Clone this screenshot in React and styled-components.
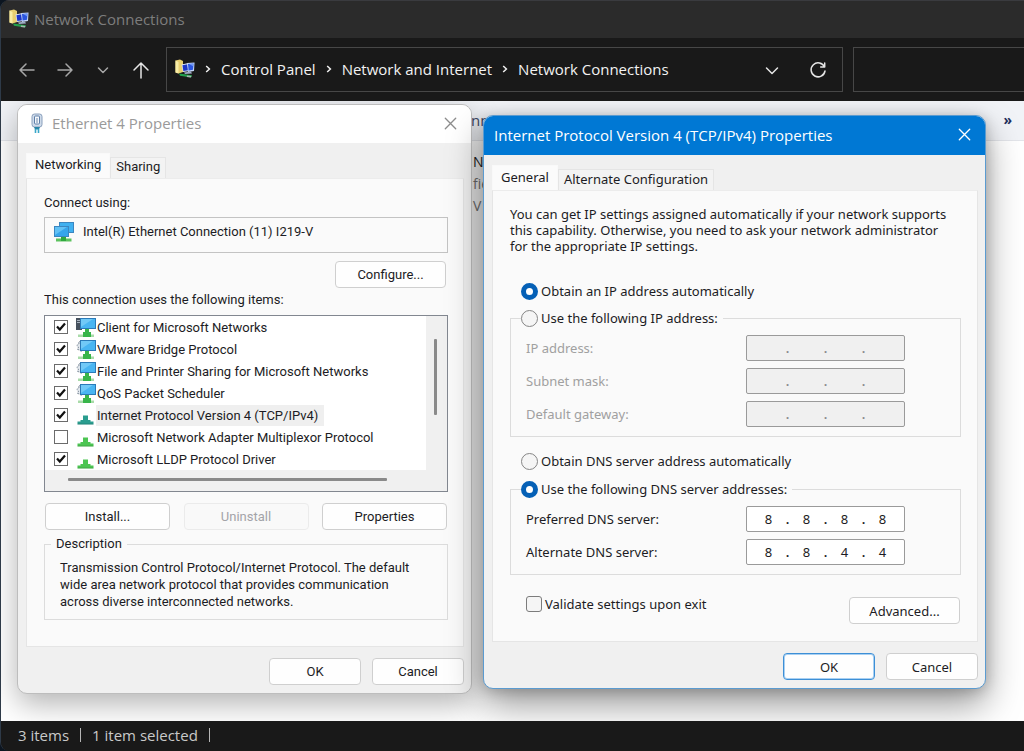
import React from "react";
import styled, { createGlobalStyle, css } from "styled-components";

const GlobalStyle = createGlobalStyle`
  * {
    box-sizing: border-box;
  }
  body {
    margin: 0;
    background: #0c1520;
    font-family: "Open Sans", "Noto Sans", sans-serif;
  }
  button,
  input {
    font: inherit;
    color: inherit;
    margin: 0;
  }
`;

/* ---------- explorer window ---------- */

const Explorer = styled.div`
  min-height: 100vh;
  display: flex;
  flex-direction: column;
  overflow: hidden;
  border-left: 1px solid #2e3a48;
  border-radius: 9px 0 0 9px;
  background: #191919;
`;

const TitleBar = styled.header`
  height: 38px;
  display: flex;
  align-items: center;
  gap: 5px;
  padding: 0 8px 2px;
  background: #2b2b2b;
  border-top: 1px solid #3a3b3f;
  color: #7d7d7d;
  font-size: 15px;
`;

const NavBar = styled.nav`
  height: 63px;
  display: flex;
  align-items: center;
  padding: 8px 0 8px 16px;
  background: #191919;
`;

const NavButtons = styled.div`
  display: flex;
  align-items: center;
  gap: 18px;
  margin-right: 15px;
`;

const IconButton = styled.button`
  display: grid;
  place-items: center;
  width: 20px;
  height: 20px;
  padding: 0;
  border: 0;
  background: none;
  color: ${({ $color }) => $color || "#e6e6e6"};
`;

const AddressBar = styled.div`
  flex: 1;
  height: 45px;
  display: flex;
  align-items: center;
  padding: 0 14px 0 8px;
  border: 1px solid #474747;
  color: #f2f2f2;
  font-size: 15px;
`;

const Crumb = styled.a`
  color: inherit;
  text-decoration: none;
  white-space: nowrap;
`;

const Crumbs = styled.div`
  flex: 1;
  display: flex;
  align-items: center;
  gap: 10px;
  padding-bottom: 2px;

  svg {
    flex: none;
  }
`;

const AddressTools = styled.div`
  display: flex;
  gap: 26px;
`;

const SearchBox = styled.input`
  width: 171px;
  height: 45px;
  margin-left: 10px;
  border: 1px solid #474747;
  border-right: 0;
  border-radius: 0;
  background: transparent;
  outline: 0;
`;

const Desktop = styled.main`
  flex: 1 0 620px;
  position: relative;
  overflow: hidden;
  background: #fff;
`;

const CommandBar = styled.div`
  height: 40px;
  display: flex;
  align-items: center;
  justify-content: space-between;
  padding: 0 12px 2px 470px;
  background: #f1f3f7;
  border-bottom: 1px solid #e3e5ea;
  color: #3d4a66;
  font-size: 15px;

  b {
    color: #1f2f5c;
    font-size: 14px;
  }
`;

const FileTile = styled.div`
  padding: 10px 0 0 472px;
  color: #777;
  font-size: 14px;
  line-height: 22px;

  strong {
    display: block;
    color: #222;
    font-weight: 400;
  }
  span {
    display: block;
  }
`;

const StatusBar = styled.footer`
  height: 30px;
  display: flex;
  align-items: center;
  gap: 11px;
  padding: 0 17px 2px;
  background: #191919;
  color: #c9c9c9;
  font-size: 15px;
`;

const Divider = styled.span`
  width: 1px;
  height: 14px;
  background: #b5b5b5;
`;

/* ---------- dialogs ---------- */

const Dialog = styled.section`
  position: absolute;
  left: ${({ $x }) => $x}px;
  top: ${({ $y }) => $y}px;
  width: ${({ $width }) => $width}px;
  overflow: hidden;
  border: 1px solid ${({ $active }) => ($active ? "#5b9bd0" : "#bdbdbd")};
  border-radius: 10px;
  background: #f0f0f0;
  color: #1c1c24;
  font-family: ${({ $font }) => $font};
  font-size: 13px;
  line-height: 16px;
  box-shadow: ${({ $active }) =>
    $active
      ? "0 16px 36px rgba(0, 0, 0, 0.4), 0 2px 14px rgba(0, 0, 0, 0.2)"
      : "0 10px 30px rgba(0, 0, 0, 0.3)"};
`;

const DialogTitle = styled.div`
  height: ${({ $active }) => ($active ? 39 : 38)}px;
  display: flex;
  align-items: center;
  gap: 6px;
  padding: 0 11px 2px 10px;
  background: ${({ $active }) => ($active ? "#0078d4" : "#fff")};
  color: ${({ $active }) => ($active ? "#fff" : "#9a9a9a")};
  font-family: "Open Sans", "Noto Sans", sans-serif;
  font-size: 15px;

  h2 {
    flex: 1;
    margin: 0;
    font-size: inherit;
    font-weight: 400;
  }
`;

const DialogBody = styled.div`
  padding: 10px 7px 8px 8px;
`;

const TabList = styled.div`
  display: flex;
  align-items: flex-end;
`;

const Tab = styled.button`
  height: 21px;
  padding: 0 5px 2px;
  border: 1px solid #e5e5e5;
  border-bottom: 0;
  background: #f3f3f3;
  white-space: nowrap;

  ${({ $selected }) =>
    $selected &&
    css`
      height: 25px;
      padding: 0 8px 2px;
      border-color: #f9f9f9;
      background: #fbfbfb;
    `}
`;

const TabPanel = styled.div`
  padding: ${({ $padding }) => $padding};
  border: 1px solid #e5e5e5;
  border-top-color: #ececec;
  background: #fafafa;
`;

const Footer = styled.div`
  display: flex;
  justify-content: flex-end;
  gap: 11px;
  padding-top: 11px;
`;

const PushButton = styled.button`
  width: ${({ $width }) => $width || 92}px;
  height: 27px;
  padding: 0;
  border: 1px solid ${({ $primary }) => ($primary ? "#3d8fd6" : "#cfcfcf")};
  border-radius: 4px;
  background: #fefefe;
  box-shadow: ${({ $primary }) => ($primary ? "inset 0 0 0 1px #a9d0f2" : "none")};

  &:disabled {
    border-color: #ebebeb;
    background: #f9f9f9;
    color: #a3a3a8;
  }
`;

const Line = styled.p`
  margin: 0;
`;

const AdapterBox = styled.div`
  height: 36px;
  display: flex;
  align-items: center;
  gap: 9px;
  margin: 6px 0 8px;
  padding: 0 9px 6px;
  border: 1px solid #c3c3c3;
`;

const RightRow = styled.div`
  display: flex;
  justify-content: flex-end;
  margin-bottom: 4px;
  padding-right: 2px;
`;

const ListBox = styled.div`
  display: grid;
  grid-template: auto 21px / 1fr 21px;
  margin: 7px 0 11px;
  border: 1px solid #828790;
  background: #f0f0f0;
`;

const ItemList = styled.ul`
  margin: 0;
  padding: 0;
  list-style: none;
  background: #fff;
`;

const Item = styled.li`
  height: 22px;
  display: flex;
  align-items: center;
  padding-left: 9px;

  label {
    display: flex;
    align-items: center;
    height: 21px;
    padding: 2px 6px 0 1px;
    background: ${({ $selected }) => ($selected ? "#efefef" : "none")};
    white-space: nowrap;
  }
`;

const Tick = styled.span`
  display: grid;
  margin-right: 8px;

  input,
  svg {
    grid-area: 1 / 1;
    width: 14px;
    height: 14px;
  }
  input {
    appearance: none;
    border: 1px solid #6b6b6b;
    background: #fff;
  }
  svg {
    display: none;
    pointer-events: none;
  }
  input:checked + svg {
    display: block;
  }
`;

const ScrollTrack = styled.div`
  display: flex;
  padding: ${({ $vertical }) => ($vertical ? "23px 0 0 8px" : "8px 0 0 23px")};
`;

const ScrollThumb = styled.div`
  width: ${({ $vertical }) => ($vertical ? "3px" : "89%")};
  height: ${({ $vertical }) => ($vertical ? "76px" : "3px")};
  border-radius: 1px;
  background: #8a8a8a;
`;

const ButtonRow = styled.div`
  display: flex;
  justify-content: space-between;
  margin-bottom: 6px;
  padding: 0 1px;
`;

const Group = styled.fieldset`
  min-width: 0;
  margin: ${({ $margin }) => $margin || 0};
  padding: ${({ $padding }) => $padding};
  border: 1px solid #dcdcdc;

  legend {
    padding: 0 5px 0 ${({ $legendPad }) => $legendPad || 0}px;
  }
`;

const Description = styled.p`
  margin: 0;
  padding-left: 9px;
  line-height: 17px;
`;

const Intro = styled.p`
  max-width: 442px;
  margin: 0 0 27px;
`;

const Choice = styled.label`
  height: 20px;
  display: flex;
  align-items: center;
  gap: 3px;
  padding-left: ${({ $indent }) => $indent || 0}px;
  white-space: nowrap;
`;

const Radio = styled.input`
  appearance: none;
  flex: none;
  width: 17px;
  height: 17px;
  border: 1px solid #858585;
  border-radius: 50%;
  background: #f5f5f5;

  &:checked {
    border: 5px solid #0560b6;
    background: #fff;
  }
`;

const CheckBox = styled.input`
  appearance: none;
  flex: none;
  width: 16px;
  height: 16px;
  border: 1px solid #7c7c7c;
  border-radius: 3px;
  background: #f5f5f5;
`;

const Fields = styled.div`
  display: grid;
  gap: 7px;
  padding-left: 5px;
`;

const FieldRow = styled.div`
  height: 26px;
  display: flex;
  align-items: center;
  justify-content: space-between;
  color: ${({ $disabled }) => ($disabled ? "#a0a0a0" : "inherit")};
`;

const IpField = styled.div`
  width: 159px;
  height: 26px;
  display: flex;
  align-items: center;
  justify-content: center;
  border: 1px solid #9a9a9a;
  border-radius: 2px;
  background: ${({ $disabled }) => ($disabled ? "#f0f0f0" : "#fff")};
  color: ${({ $disabled }) => ($disabled ? "#8a8a8a" : "inherit")};

  input {
    width: 30px;
    height: 20px;
    padding: 0;
    border: 0;
    outline: 0;
    background: none;
    text-align: center;
  }
  span {
    width: 8px;
    font-weight: 600;
    text-align: center;
  }
`;

const OptionRow = styled.div`
  display: flex;
  align-items: flex-start;
  justify-content: space-between;
  padding: 19px 1px 0 16px;

  button {
    margin-top: 3px;
  }
`;

/* ---------- icons ---------- */

const Stroke = ({ d, size = 18, width = 1.5 }) => (
  <svg
    width={size}
    height={size}
    viewBox="0 0 18 18"
    fill="none"
    stroke="currentColor"
    strokeWidth={width}
    strokeLinecap="round"
    strokeLinejoin="round"
  >
    <path d={d} />
  </svg>
);

const Chevron = () => (
  <svg width="6" height="8" viewBox="0 0 6 8" fill="none" stroke="#f0f0f0" strokeWidth="1.5">
    <path d="M1.2 1 4.4 4 1.2 7" />
  </svg>
);

const ConnectionsIcon = () => (
  <svg width="20" height="20" viewBox="0 0 20 20">
    <path d="M0.5 1.5 5 0.5 8 2v11l-4.500 1.500-3-1z" fill="#e8cf70" />
    <path d="M0.500 1.500 3.500 3v11.500l-3-1z" fill="#f8eda6" />
    <path d="m6.500 5.500 7-1.500 1 8-6.500 1z" fill="#dbe4f5" />
    <path d="m7.500 6.300 5-1 .8 6-5 .8z" fill="#1c35c8" />
    <path d="m12 4 7.500-.5-.5 8.500-6 1z" fill="#c3d4f4" />
    <path d="m13 5 5.500-.4-.5 6.200-4.400.7z" fill="#2b55df" />
    <path d="m14 5 4.300-.3-.2 2.500z" fill="#6f97f5" />
    <path d="m9 13.500 7-1 1 2-7 .6z" fill="#9fabc4" />
    <path d="m4 14.500 13 1.700-1 2.300-11-1.700z" fill="#22a04c" />
    <path d="m12 16.500 4.500.6-.7 1.400-4-.6z" fill="#a8b5b0" />
  </svg>
);

const EthernetPlugIcon = () => (
  <svg width="18" height="20" viewBox="0 0 18 20">
    <rect x="4" y="1" width="10" height="13" rx="2.500" fill="#cfdbea" stroke="#8aa0bd" />
    <rect x="6.500" y="3" width="5" height="8" rx="1" fill="#f4f8fc" stroke="#5f7fa8" />
    <path d="M9 5v5" stroke="#6c86aa" />
    <path d="M6 14h6l-1 2.500H7z" fill="#2a86a8" />
    <path d="M7.500 16v4M10.500 16v4" stroke="#39a7c9" strokeWidth="1.600" />
  </svg>
);

const AdapterIcon = () => (
  <svg width="20" height="20" viewBox="0 0 20 20">
    <path d="M7 13h5v3.500h5.500V19.500H2v-3h5z" fill="#5cc25e" />
    <path d="M7 13h5v6H7z" fill="#2fa83f" />
    <rect x="5.500" y="0.500" width="14" height="10" fill="#3fb0f0" stroke="#3a86c0" />
    <rect x="0.500" y="4.500" width="14" height="10" fill="#35a5ec" stroke="#3a86c0" />
    <path d="M1 5h12L1 13z" fill="#7ed3fb" opacity="0.6" />
  </svg>
);

const ClientIcon = ({ dark }) => (
  <svg width="20" height="21" viewBox="0 0 20 21">
    {dark ? (
      <>
        <rect x="0" y="1" width="6" height="12" fill="#46515e" />
        <path d="M1 3.500h4M1 5.500h4" stroke="#a8b3bf" />
      </>
    ) : (
      <path
        d="M5 2.500 2.500 3 3 5 .8 6.500 2.500 8l-1 2.500L4 11l1.500 2"
        fill="#e3e9ef"
        stroke="#7f8c9a"
        strokeDasharray="2 1"
      />
    )}
    <rect x="4.500" y="1.500" width="15" height="10" fill="#49b5f2" stroke="#2b7ab8" />
    <path d="M5 2h12L5 10z" fill="#83d2fa" opacity="0.7" />
    <path d="M2 17.500h16v2.500H2z" fill="#a9dba9" />
    <path d="M9 12h4v3h2v5H7v-5h2z" fill="#38b54a" />
  </svg>
);

const ProtocolIcon = ({ color }) => (
  <svg width="20" height="21" viewBox="0 0 20 21">
    <path d="M7 10.500h5v4.500h2.500v1.500H17.500v3H1.500v-3H4.500V15H7z" fill={color} />
    <path d="M1.500 19h16" stroke="#000" strokeOpacity="0.15" />
  </svg>
);

const CloseIcon = () => (
  <Stroke d="M3.500 3.500 14.500 14.500M14.500 3.500 3.500 14.500" size={17} width={1.4} />
);

/* ---------- content ---------- */

const items = [
  { name: "Client for Microsoft Networks", checked: true, icon: <ClientIcon dark /> },
  { name: "VMware Bridge Protocol", checked: true, icon: <ClientIcon /> },
  { name: "File and Printer Sharing for Microsoft Networks", checked: true, icon: <ClientIcon /> },
  { name: "QoS Packet Scheduler", checked: true, icon: <ClientIcon /> },
  {
    name: "Internet Protocol Version 4 (TCP/IPv4)",
    checked: true,
    selected: true,
    icon: <ProtocolIcon color="#2a9d8f" />,
  },
  { name: "Microsoft Network Adapter Multiplexor Protocol", icon: <ProtocolIcon color="#4cc552" /> },
  { name: "Microsoft LLDP Protocol Driver", checked: true, icon: <ProtocolIcon color="#4cc552" /> },
];

const IpRow = ({ id, label, value = ["", "", "", ""], disabled }) => (
  <FieldRow $disabled={disabled}>
    <label htmlFor={`${id}-0`}>{label}</label>
    <IpField $disabled={disabled}>
      {value.map((octet, i) => (
        <React.Fragment key={i}>
          {i > 0 && <span>.</span>}
          <input id={`${id}-${i}`} defaultValue={octet} disabled={disabled} maxLength={3} />
        </React.Fragment>
      ))}
    </IpField>
  </FieldRow>
);

const EthernetDialog = () => (
  <Dialog $x={16} $y={3} $width={455} $font={'Roboto, "Liberation Sans", sans-serif'}>
    <DialogTitle>
      <EthernetPlugIcon />
      <h2>Ethernet 4 Properties</h2>
      <IconButton $color="#8c8c8c">
        <CloseIcon />
      </IconButton>
    </DialogTitle>
    <DialogBody>
      <TabList>
        <Tab $selected>Networking</Tab>
        <Tab>Sharing</Tab>
      </TabList>
      <TabPanel $padding="16px 15px 26px 17px">
        <Line>Connect using:</Line>
        <AdapterBox>
          <AdapterIcon />
          <span>Intel(R) Ethernet Connection (11) I219-V</span>
        </AdapterBox>
        <RightRow>
          <PushButton $width={111}>Configure...</PushButton>
        </RightRow>
        <Line>This connection uses the following items:</Line>
        <ListBox>
          <ItemList>
            {items.map((item, i) => (
              <Item key={item.name} $selected={item.selected}>
                <Tick>
                  <input type="checkbox" id={`item-${i}`} defaultChecked={item.checked} />
                  <svg viewBox="0 0 14 14" fill="none" stroke="#111" strokeWidth="2.200">
                    <path d="M3 6.500 5.800 9.500 11 3.500" />
                  </svg>
                </Tick>
                {item.icon}
                <label htmlFor={`item-${i}`}>{item.name}</label>
              </Item>
            ))}
          </ItemList>
          <ScrollTrack $vertical>
            <ScrollThumb $vertical />
          </ScrollTrack>
          <ScrollTrack>
            <ScrollThumb />
          </ScrollTrack>
        </ListBox>
        <ButtonRow>
          <PushButton $width={125}>Install...</PushButton>
          <PushButton $width={125} disabled>
            Uninstall
          </PushButton>
          <PushButton $width={125}>Properties</PushButton>
        </ButtonRow>
        <Group $padding="7px 24px 9px 6px" $legendPad={5}>
          <legend>Description</legend>
          <Description>
            Transmission Control Protocol/Internet Protocol. The default wide area network protocol
            that provides communication across diverse interconnected networks.
          </Description>
        </Group>
      </TabPanel>
      <Footer>
        <PushButton>OK</PushButton>
        <PushButton>Cancel</PushButton>
      </Footer>
    </DialogBody>
  </Dialog>
);

const Ipv4Dialog = () => (
  <Dialog $active $x={482} $y={14} $width={503} $font={'"Noto Sans", "Open Sans", sans-serif'}>
    <DialogTitle $active>
      <h2>Internet Protocol Version 4 (TCP/IPv4) Properties</h2>
      <IconButton $color="#fff">
        <CloseIcon />
      </IconButton>
    </DialogTitle>
    <DialogBody>
      <TabList>
        <Tab $selected>General</Tab>
        <Tab>Alternate Configuration</Tab>
      </TabList>
      <TabPanel $padding="15px 16px 17px 17px">
        <Intro>
          You can get IP settings assigned automatically if your network supports this capability.
          Otherwise, you need to ask your network administrator for the appropriate IP settings.
        </Intro>
        <Choice $indent={11}>
          <Radio type="radio" name="ip" defaultChecked />
          Obtain an IP address automatically
        </Choice>
        <Group $margin="7px 0 14px" $padding="7px 55px 9px 10px">
          <legend>
            <Choice>
              <Radio type="radio" name="ip" />
              Use the following IP address:
            </Choice>
          </legend>
          <Fields>
            <IpRow id="ip" label="IP address:" disabled />
            <IpRow id="mask" label="Subnet mask:" disabled />
            <IpRow id="gateway" label="Default gateway:" disabled />
          </Fields>
        </Group>
        <Choice $indent={11}>
          <Radio type="radio" name="dns" />
          Obtain DNS server address automatically
        </Choice>
        <Group $margin="8px 0 0" $padding="7px 55px 9px 10px">
          <legend>
            <Choice>
              <Radio type="radio" name="dns" defaultChecked />
              Use the following DNS server addresses:
            </Choice>
          </legend>
          <Fields>
            <IpRow id="dns1" label="Preferred DNS server:" value={["8", "8", "8", "8"]} />
            <IpRow id="dns2" label="Alternate DNS server:" value={["8", "8", "4", "4"]} />
          </Fields>
        </Group>
        <OptionRow>
          <Choice>
            <CheckBox type="checkbox" />
            Validate settings upon exit
          </Choice>
          <PushButton $width={111}>Advanced...</PushButton>
        </OptionRow>
      </TabPanel>
      <Footer>
        <PushButton $primary>OK</PushButton>
        <PushButton>Cancel</PushButton>
      </Footer>
    </DialogBody>
  </Dialog>
);

const App = () => {
  return (
    <>
      <GlobalStyle />
      <Explorer>
        <TitleBar>
          <ConnectionsIcon />
          <span>Network Connections</span>
        </TitleBar>
        <NavBar>
          <NavButtons>
            <IconButton $color="#a6a6a6">
              <Stroke d="M2 9h14M8 3 2 9l6 6" />
            </IconButton>
            <IconButton $color="#a6a6a6">
              <Stroke d="M2 9h14M10 3l6 6-6 6" />
            </IconButton>
            <IconButton $color="#a6a6a6">
              <Stroke d="m4.500 7 4.500 4.500L13.500 7" />
            </IconButton>
            <IconButton>
              <Stroke d="M9 17V2M2 9l7-7 7 7" />
            </IconButton>
          </NavButtons>
          <AddressBar>
            <Crumbs>
              <ConnectionsIcon />
              <Chevron />
              <Crumb href="#">Control Panel</Crumb>
              <Chevron />
              <Crumb href="#">Network and Internet</Crumb>
              <Chevron />
              <Crumb href="#">Network Connections</Crumb>
            </Crumbs>
            <AddressTools>
              <IconButton>
                <Stroke d="m3.500 7 5.500 5.500L14.500 7" />
              </IconButton>
              <IconButton>
                <Stroke d="M15.500 6A7 7 0 1 0 16 10M15.700 2v4h-4" />
              </IconButton>
            </AddressTools>
          </AddressBar>
          <SearchBox type="search" aria-label="Search" />
        </NavBar>
        <Desktop>
          <CommandBar>
            <span>nn</span>
            <b>»</b>
          </CommandBar>
          <FileTile>
            <strong>N</strong>
            <span>fie</span>
            <span>V</span>
          </FileTile>
          <EthernetDialog />
          <Ipv4Dialog />
        </Desktop>
        <StatusBar>
          <span>3 items</span>
          <Divider />
          <span>1 item selected</span>
          <Divider />
        </StatusBar>
      </Explorer>
    </>
  );
};

export default App;
